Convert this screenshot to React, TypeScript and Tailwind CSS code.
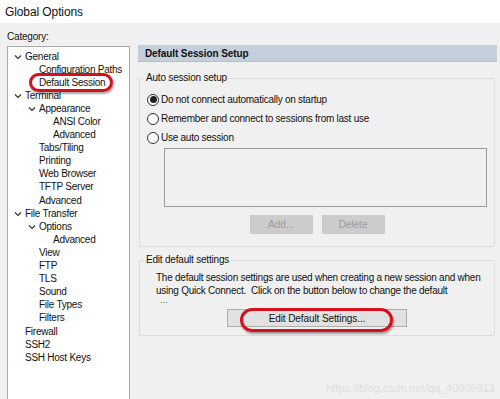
import React from "react";

const font = { fontFamily: '"Liberation Sans", Arial, sans-serif' };

type Item = { label: string; level: number; chevron?: boolean };

const items: Item[] = [
  { label: "General", level: 0, chevron: true },
  { label: "Configuration Paths", level: 1 },
  { label: "Default Session", level: 1 },
  { label: "Terminal", level: 0, chevron: true },
  { label: "Appearance", level: 1, chevron: true },
  { label: "ANSI Color", level: 2 },
  { label: "Advanced", level: 2 },
  { label: "Tabs/Tiling", level: 1 },
  { label: "Printing", level: 1 },
  { label: "Web Browser", level: 1 },
  { label: "TFTP Server", level: 1 },
  { label: "Advanced", level: 1 },
  { label: "File Transfer", level: 0, chevron: true },
  { label: "Options", level: 1, chevron: true },
  { label: "Advanced", level: 2 },
  { label: "View", level: 1 },
  { label: "FTP", level: 1 },
  { label: "TLS", level: 1 },
  { label: "Sound", level: 1 },
  { label: "File Types", level: 1 },
  { label: "Filters", level: 1 },
  { label: "Firewall", level: 0 },
  { label: "SSH2", level: 0 },
  { label: "SSH Host Keys", level: 0 },
];

function Chevron() {
  return (
    <svg width="8" height="6" viewBox="0 0 8 6" className="shrink-0">
      <path d="M1 1.5 L4 4.5 L7 1.5" fill="none" stroke="#333" strokeWidth="1.2" />
    </svg>
  );
}

function Radio({ checked, label }: { checked?: boolean; label: string }) {
  return (
    <div className="flex items-center h-[19px]">
      <div className="w-[12px] h-[12px] rounded-full border border-[#333] bg-white flex items-center justify-center shrink-0">
        {checked && <div className="w-[7px] h-[7px] rounded-full bg-[#222]" />}
      </div>
      <span className="ml-[2px] text-[10px] tracking-[-0.25px] text-[#111]">{label}</span>
    </div>
  );
}

export default function App() {
  return (
    <div className="w-[500px] h-[399px] bg-[#f0f0f0] overflow-hidden relative text-[#111]" style={font}>
      <div className="h-[23px] bg-white flex items-center pl-[5px] text-[12px] tracking-[-0.1px] text-[#111]">Global Options</div>
      <div className="flex">
        {/* Left */}
        <div className="w-[138px] shrink-0 pl-[7px]">
          <div className="h-[23px] pt-[4px] flex items-center text-[10px] tracking-[-0.2px]">Category:</div>
          <div className="w-[123px] h-[360px] bg-white border border-[#a9a9a9] pt-[3px]">
            {items.map((it, i) => (
              <div
                key={i}
                className="h-[13.1px] flex items-center text-[10px] tracking-[-0.25px] leading-none"
                style={{ paddingLeft: 6 + it.level * 14 }}
              >
                <div className="w-[11px] flex items-center shrink-0">{it.chevron && <Chevron />}</div>
                <span className="whitespace-nowrap">{it.label}</span>
              </div>
            ))}
          </div>
        </div>
        {/* Right */}
        <div className="flex-1 pt-[22px] pr-[3px]">
          <div className="h-[17px] bg-[#c3cfdb] border-b border-[#b4c0cc] flex items-center pl-[7px] text-[10px] tracking-[-0.1px] font-bold">
            Default Session Setup
          </div>
          <div className="mt-[16px] ml-[1px] mr-[2px] border border-[#dcdcdc] rounded-[2px] relative h-[169px] px-[7px] pt-[11px]">
            <div className="absolute -top-[8px] left-[5px] bg-[#f0f0f0] px-[1px] text-[10px] tracking-[-0.2px] leading-[14px]">Auto session setup</div>
            <Radio checked label="Do not connect automatically on startup" />
            <Radio label="Remember and connect to sessions from last use" />
            <Radio label="Use auto session" />
            <div className="ml-[17px] mt-[1px] h-[59px] border border-[#9a9a9a] bg-[#f0f0f0]" />
            <div className="flex justify-center gap-[9px] mt-[8px]">
              <div className="w-[63px] h-[19px] bg-[#cccccc] flex items-center justify-center text-[10px] text-[#9a9a9a]">Add...</div>
              <div className="w-[63px] h-[19px] bg-[#cccccc] flex items-center justify-center text-[10px] text-[#9a9a9a]">Delete</div>
            </div>
          </div>
          <div className="mt-[13px] ml-[1px] mr-[2px] border border-[#dcdcdc] rounded-[2px] relative h-[76px] pl-[16px] pr-[4px] pt-[10px]">
            <div className="absolute -top-[8px] left-[5px] bg-[#f0f0f0] px-[1px] text-[10px] tracking-[-0.2px] leading-[14px]">Edit default settings</div>
            <div className="text-[10px] tracking-[-0.25px] leading-[13px]">
              <div className="whitespace-nowrap">The default session settings are used when creating a new session and when</div>
              <div className="whitespace-nowrap">using Quick Connect.&nbsp; Click on the button below to change the default</div>
            </div>
            <div className="text-[9px] leading-[6px] pl-[4px] text-[#555]">...</div>
            <div className="flex justify-center mt-[6px] pr-[12px]">
              <div className="w-[180px] h-[18px] bg-[#e1e1e1] border border-[#adadad] flex items-center justify-center text-[10px] tracking-[-0.1px]">
                Edit Default Settings...
              </div>
            </div>
          </div>
        </div>
      </div>

      {/* annotation ovals */}
      <div className="absolute left-[29px] top-[73px] w-[84px] h-[19px] rounded-full border-[3px] border-[#d4101c] shadow-[1px_2px_2px_rgba(0,0,0,0.35)]" />
      <div className="absolute left-[240px] top-[308px] w-[153px] h-[24px] rounded-[12px] border-[3px] border-[#d4101c] shadow-[1px_2px_2px_rgba(0,0,0,0.35)]" />

      {/* watermark */}
      <div className="absolute right-[5px] top-[380px] text-[11px] text-[#dedede]">https://blog.csdn.net/qq_40805913</div>
    </div>
  );
}
